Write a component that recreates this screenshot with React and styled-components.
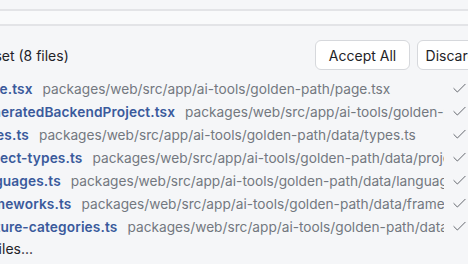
import React from 'react';
import styled, { createGlobalStyle } from 'styled-components';
import { Check, X, FileCode } from 'lucide-react';

const Global = createGlobalStyle`
    html, body {
        margin: 0;
        padding: 0;
        background: #f5f6f8;
        font-family: Inter, "Noto Sans", sans-serif;
    }
`

const Viewport = styled.div`
    width: 468px;
    height: 264px;
    overflow: hidden;
`

const Strip = styled.div`
    margin-top: 9px;
    height: 13px;
    background: #f9fafb;
    border-top: 2px solid #e3e4e7;
    border-bottom: 2px solid #e3e4e7;
`

const Panel = styled.div`
    margin-left: -69px;
    width: 562px;
    padding: 0 12px;
`

const Header = styled.div`
    display: flex;
    align-items: center;
    justify-content: space-between;
    padding-top: 14px;
    margin-bottom: 7px;
`

const Title = styled.div`
    font-size: 14px;
    color: #1f2328;
`

const Buttons = styled.div`
    display: flex;
    gap: 7px;
`

const Button = styled.button`
    height: 30px;
    width: ${p => p.$w}px;
    background: #fff;
    border: 1px solid #d6d8dc;
    border-radius: 6px;
    font-family: inherit;
    font-size: 14px;
    color: #1f2328;
    padding: 0;
`

const Row = styled.div`
    display: flex;
    align-items: center;
    height: 23px;
    gap: 9px;
    padding-right: 14px;
    font-size: 13.7px;
    white-space: nowrap;
`

const Icon = styled.span`
    width: 22px;
    display: flex;
    color: #8a8f98;
`

const Name = styled.span`
    color: #3a5a9c;
    font-weight: 600;
    letter-spacing: 0.12px;
    margin-right: 1px;
`

const Path = styled.span`
    flex: 1;
    min-width: 0;
    overflow: hidden;
    color: #73787f;
`

const Mark = styled.span`
    display: flex;
    color: #62666d;
    margin-left: -2px;
`

const More = styled.div`
    font-size: 14px;
    color: #1f2328;
    height: 22px;
    line-height: 22px;
    margin-left: 3px;
`

const files = [
    ['page.tsx', 'packages/web/src/app/ai-tools/golden-path/page.tsx'],
    ['GeneratedBackendProject.tsx', 'packages/web/src/app/ai-tools/golden-path/GeneratedBackendProject.tsx'],
    ['types.ts', 'packages/web/src/app/ai-tools/golden-path/data/types.ts'],
    ['project-types.ts', 'packages/web/src/app/ai-tools/golden-path/data/project-types.ts'],
    ['languages.ts', 'packages/web/src/app/ai-tools/golden-path/data/languages.ts'],
    ['frameworks.ts', 'packages/web/src/app/ai-tools/golden-path/data/frameworks.ts'],
    ['feature-categories.ts', 'packages/web/src/app/ai-tools/golden-path/data/feature-categories.ts'],
];

export default function App() {
    return (
        <Viewport>
            <Global />
            <Strip />
            <Panel>
                <Header>
                    <Title>Changeset (8 files)</Title>
                    <Buttons>
                        <Button $w={95}>Accept All</Button>
                        <Button $w={88}>Discard All</Button>
                    </Buttons>
                </Header>
                {files.map(([name, path]) => (
                    <Row key={name}>
                        <Icon><FileCode size={16} strokeWidth={1.5} /></Icon>
                        <Name>{name}</Name>
                        <Path>{path}</Path>
                        <Mark><Check size={17} strokeWidth={1.4} /></Mark>
                        <Mark><X size={16} strokeWidth={1.4} /></Mark>
                    </Row>
                ))}
                <More>1 more files...</More>
            </Panel>
        </Viewport>
    );
}
